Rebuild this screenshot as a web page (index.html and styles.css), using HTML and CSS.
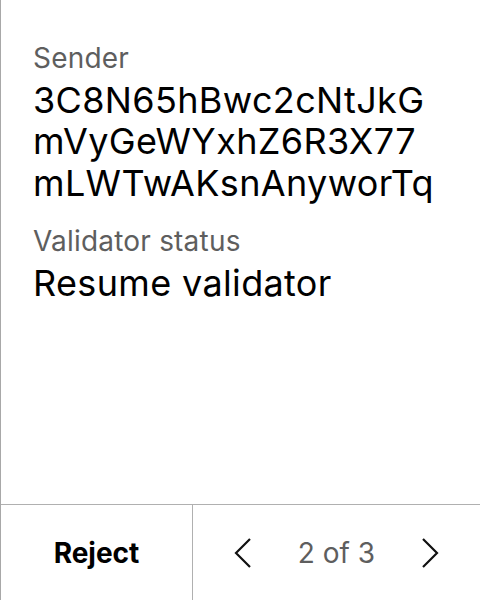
FILE: index.html
```html
<!DOCTYPE html>
<html>
<head>
<meta charset="utf-8">
<link rel="stylesheet" href="styles.css">
</head>
<body>
<div class="panel">
  <div class="content">
    <div class="field">
      <div class="label">Sender</div>
      <div class="value">3C8N65hBwc2cNtJkG<br>mVyGeWYxhZ6R3X77<br>mLWTwAKsnAnyworTq</div>
    </div>
    <div class="field">
      <div class="label">Validator status</div>
      <div class="value">Resume validator</div>
    </div>
  </div>
  <div class="footer">
    <div class="reject">Reject</div>
    <div class="pager">
      <svg class="chev" width="20" height="32" viewBox="0 0 20 32"><path d="M17 2 L3 16 L17 30" fill="none" stroke="#111" stroke-width="2.2"/></svg>
      <span class="count">2 of 3</span>
      <svg class="chev" width="20" height="32" viewBox="0 0 20 32"><path d="M3 2 L17 16 L3 30" fill="none" stroke="#111" stroke-width="2.2"/></svg>
    </div>
  </div>
</div>
</body>
</html>
```
FILE: styles.css
```css
html, body {
  margin: 0;
  padding: 0;
  background: #fff;
}
body {
  font-family: Inter, "Noto Sans", sans-serif;
  color: #000;
}
.panel {
  width: 480px;
  height: 600px;
  box-sizing: border-box;
  border-left: 1px solid #a8a8a8;
  display: flex;
  flex-direction: column;
}
.content {
  flex: 1;
  padding: 42px 0 0 32px;
  display: flex;
  flex-direction: column;
  gap: 21px;
}
.field {
  display: flex;
  flex-direction: column;
  gap: 6px;
}
.label {
  font-size: 28px;
  line-height: 32px;
  letter-spacing: 0.2px;
  color: #5e5e5e;
}
.value {
  font-size: 36px;
  line-height: 41.4px;
  letter-spacing: 0.35px;
}
.footer {
  height: 95px;
  border-top: 1px solid #b0b0b0;
  display: flex;
}
.reject {
  width: 191px;
  border-right: 1px solid #b0b0b0;
  display: flex;
  align-items: center;
  justify-content: center;
  font-size: 28px;
  font-weight: 700;
}
.pager {
  flex: 1;
  display: flex;
  align-items: center;
  justify-content: space-between;
  padding: 0 40px;
}
.count {
  font-size: 28px;
  color: #5e5e5e;
}
```
